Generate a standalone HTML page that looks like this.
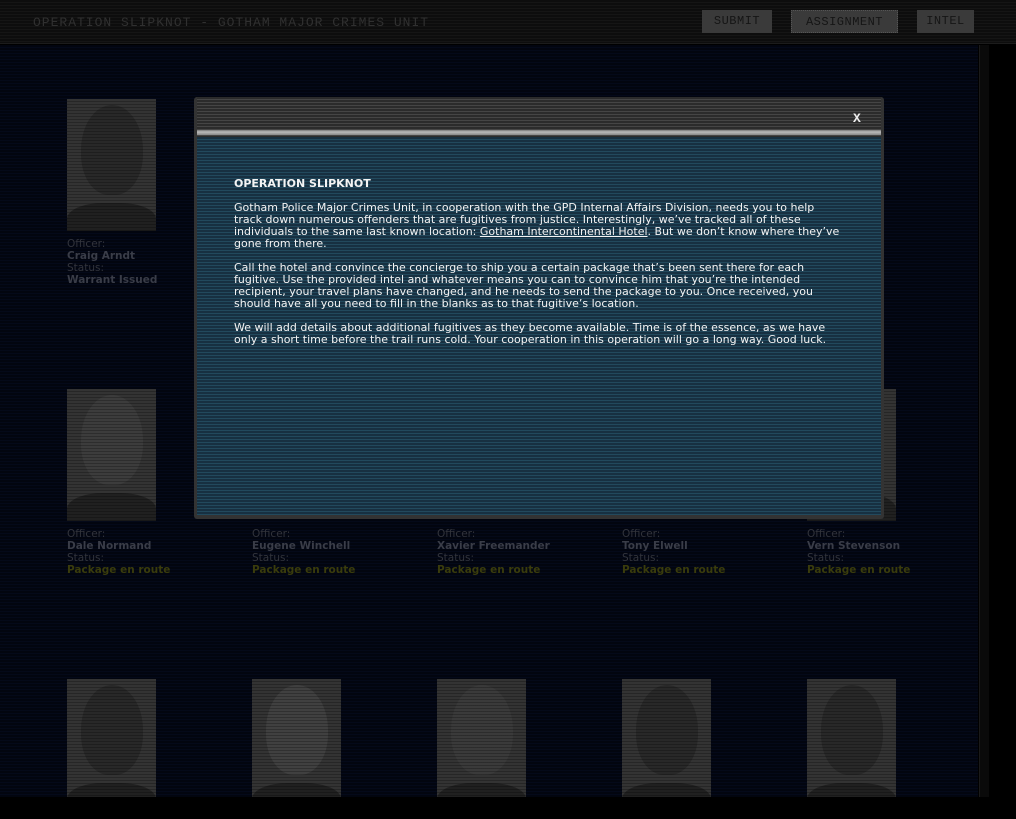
<!DOCTYPE html>
<html><head><meta charset="utf-8"><style>
*{margin:0;padding:0;box-sizing:border-box}
body{width:1016px;height:819px;background:#000;position:relative;overflow:hidden;font-family:"DejaVu Sans","Liberation Sans",sans-serif}
#top{position:absolute;left:0;top:0;width:1016px;height:44px;background:repeating-linear-gradient(#0d0d0d 0 2px,#151515 2px 3px);border-bottom:1px solid #1c1c1c}
#title{position:absolute;left:33px;top:15px;font-family:"Liberation Mono",monospace;font-size:13px;color:#303030;letter-spacing:1px}
.btn{position:absolute;top:10px;height:23px;background:#3a3a3a;color:#151515;font-family:"Liberation Mono",monospace;font-size:12px;line-height:23px;text-align:center;letter-spacing:0.5px}
#content{position:absolute;left:0;top:45px;width:978px;height:752px;background:repeating-linear-gradient(#02050f 0 2px,#040919 2px 3px)}
#sb{position:absolute;left:979px;top:45px;width:10px;height:752px;background:#0a0a0a;border-left:1px solid #1a1a1a}
.p{position:absolute;width:89px;height:132px;background:#333;overflow:hidden}
.p .h{position:absolute;left:14px;top:6px;width:62px;height:90px;border-radius:50% 50% 45% 45%;background:#282828}
.p .s{position:absolute;left:0;top:104px;width:89px;height:40px;border-radius:40% 40% 0 0;background:#202020}
.p::after{content:"";position:absolute;inset:0;background:repeating-linear-gradient(transparent 0 2px,rgba(0,0,0,.25) 2px 3px)}
.t{position:absolute;font-size:10.5px;line-height:12px;color:#32343c}
.t b{color:#3a3d48}
.t b.g{color:#3a3c0c}
#modal{position:absolute;left:194px;top:97px;width:690px;height:422px;background:#333;border-radius:3px}
#mh{position:absolute;left:3px;top:0;width:684px;height:40px;background:repeating-linear-gradient(#2b2b2b 0 2px,#454545 2px 3px)}
#band{position:absolute;left:3px;top:33px;width:684px;height:5px;background:linear-gradient(#777,#bbb 40%,#888)}
#mb{position:absolute;left:3px;top:40px;width:684px;height:378px;background:repeating-linear-gradient(#173041 0 2px,#22495d 2px 3px)}
#x{position:absolute;left:659px;top:14px;color:#eee;font-family:"Liberation Mono",monospace;font-size:13px;font-weight:bold}
#txt{position:absolute;left:37px;top:41px;width:606px;color:#f4f4f4;font-size:11px;line-height:12px}
#txt p{margin-bottom:12px}
#txt u{text-decoration:underline}
</style></head><body>
<div id="top"><div id="title">OPERATION SLIPKNOT - GOTHAM MAJOR CRIMES UNIT</div>
<div class="btn" style="left:702px;width:70px">SUBMIT</div>
<div class="btn" style="left:791px;width:107px;border:1px dotted #555">ASSIGNMENT</div>
<div class="btn" style="left:917px;width:57px">INTEL</div></div>
<div id="content"></div><div id="sb"></div>

<div class="p" style="left:67px;top:99px"><div class="h"></div><div class="s"></div></div>
<div class="t" style="left:67px;top:238px">Officer:<br><b>Craig Arndt</b><br>Status:<br><b>Warrant Issued</b></div>

<div class="p" style="left:67px;top:389px"><div class="h" style="background:#3c3c3c"></div><div class="s"></div></div>
<div class="p" style="left:807px;top:389px"><div class="h"></div><div class="s"></div></div>
<div class="t" style="left:67px;top:528px">Officer:<br><b>Dale Normand</b><br>Status:<br><b class="g">Package en route</b></div>
<div class="t" style="left:252px;top:528px">Officer:<br><b>Eugene Winchell</b><br>Status:<br><b class="g">Package en route</b></div>
<div class="t" style="left:437px;top:528px">Officer:<br><b>Xavier Freemander</b><br>Status:<br><b class="g">Package en route</b></div>
<div class="t" style="left:622px;top:528px">Officer:<br><b>Tony Elwell</b><br>Status:<br><b class="g">Package en route</b></div>
<div class="t" style="left:807px;top:528px">Officer:<br><b>Vern Stevenson</b><br>Status:<br><b class="g">Package en route</b></div>

<div class="p" style="left:67px;top:679px;height:118px"><div class="h"></div><div class="s"></div></div>
<div class="p" style="left:252px;top:679px;height:118px"><div class="h" style="background:#404040"></div><div class="s"></div></div>
<div class="p" style="left:437px;top:679px;height:118px"><div class="h" style="background:#3a3a3a"></div><div class="s"></div></div>
<div class="p" style="left:622px;top:679px;height:118px"><div class="h"></div><div class="s"></div></div>
<div class="p" style="left:807px;top:679px;height:118px"><div class="h"></div><div class="s"></div></div>

<div id="modal"><div id="mh"></div><div id="band"></div><div id="mb"><div id="txt">
<p><b>OPERATION SLIPKNOT</b></p>
<p>Gotham Police Major Crimes Unit, in cooperation with the GPD Internal Affairs Division, needs you to help track down numerous offenders that are fugitives from justice. Interestingly, we’ve tracked all of these individuals to the same last known location: <u>Gotham Intercontinental Hotel</u>. But we don’t know where they’ve gone from there.</p>
<p>Call the hotel and convince the concierge to ship you a certain package that’s been sent there for each fugitive. Use the provided intel and whatever means you can to convince him that you’re the intended recipient, your travel plans have changed, and he needs to send the package to you. Once received, you should have all you need to fill in the blanks as to that fugitive’s location.</p>
<p>We will add details about additional fugitives as they become available. Time is of the essence, as we have only a short time before the trail runs cold. Your cooperation in this operation will go a long way. Good luck.</p>
</div></div><div id="x">X</div></div>
</body></html>
